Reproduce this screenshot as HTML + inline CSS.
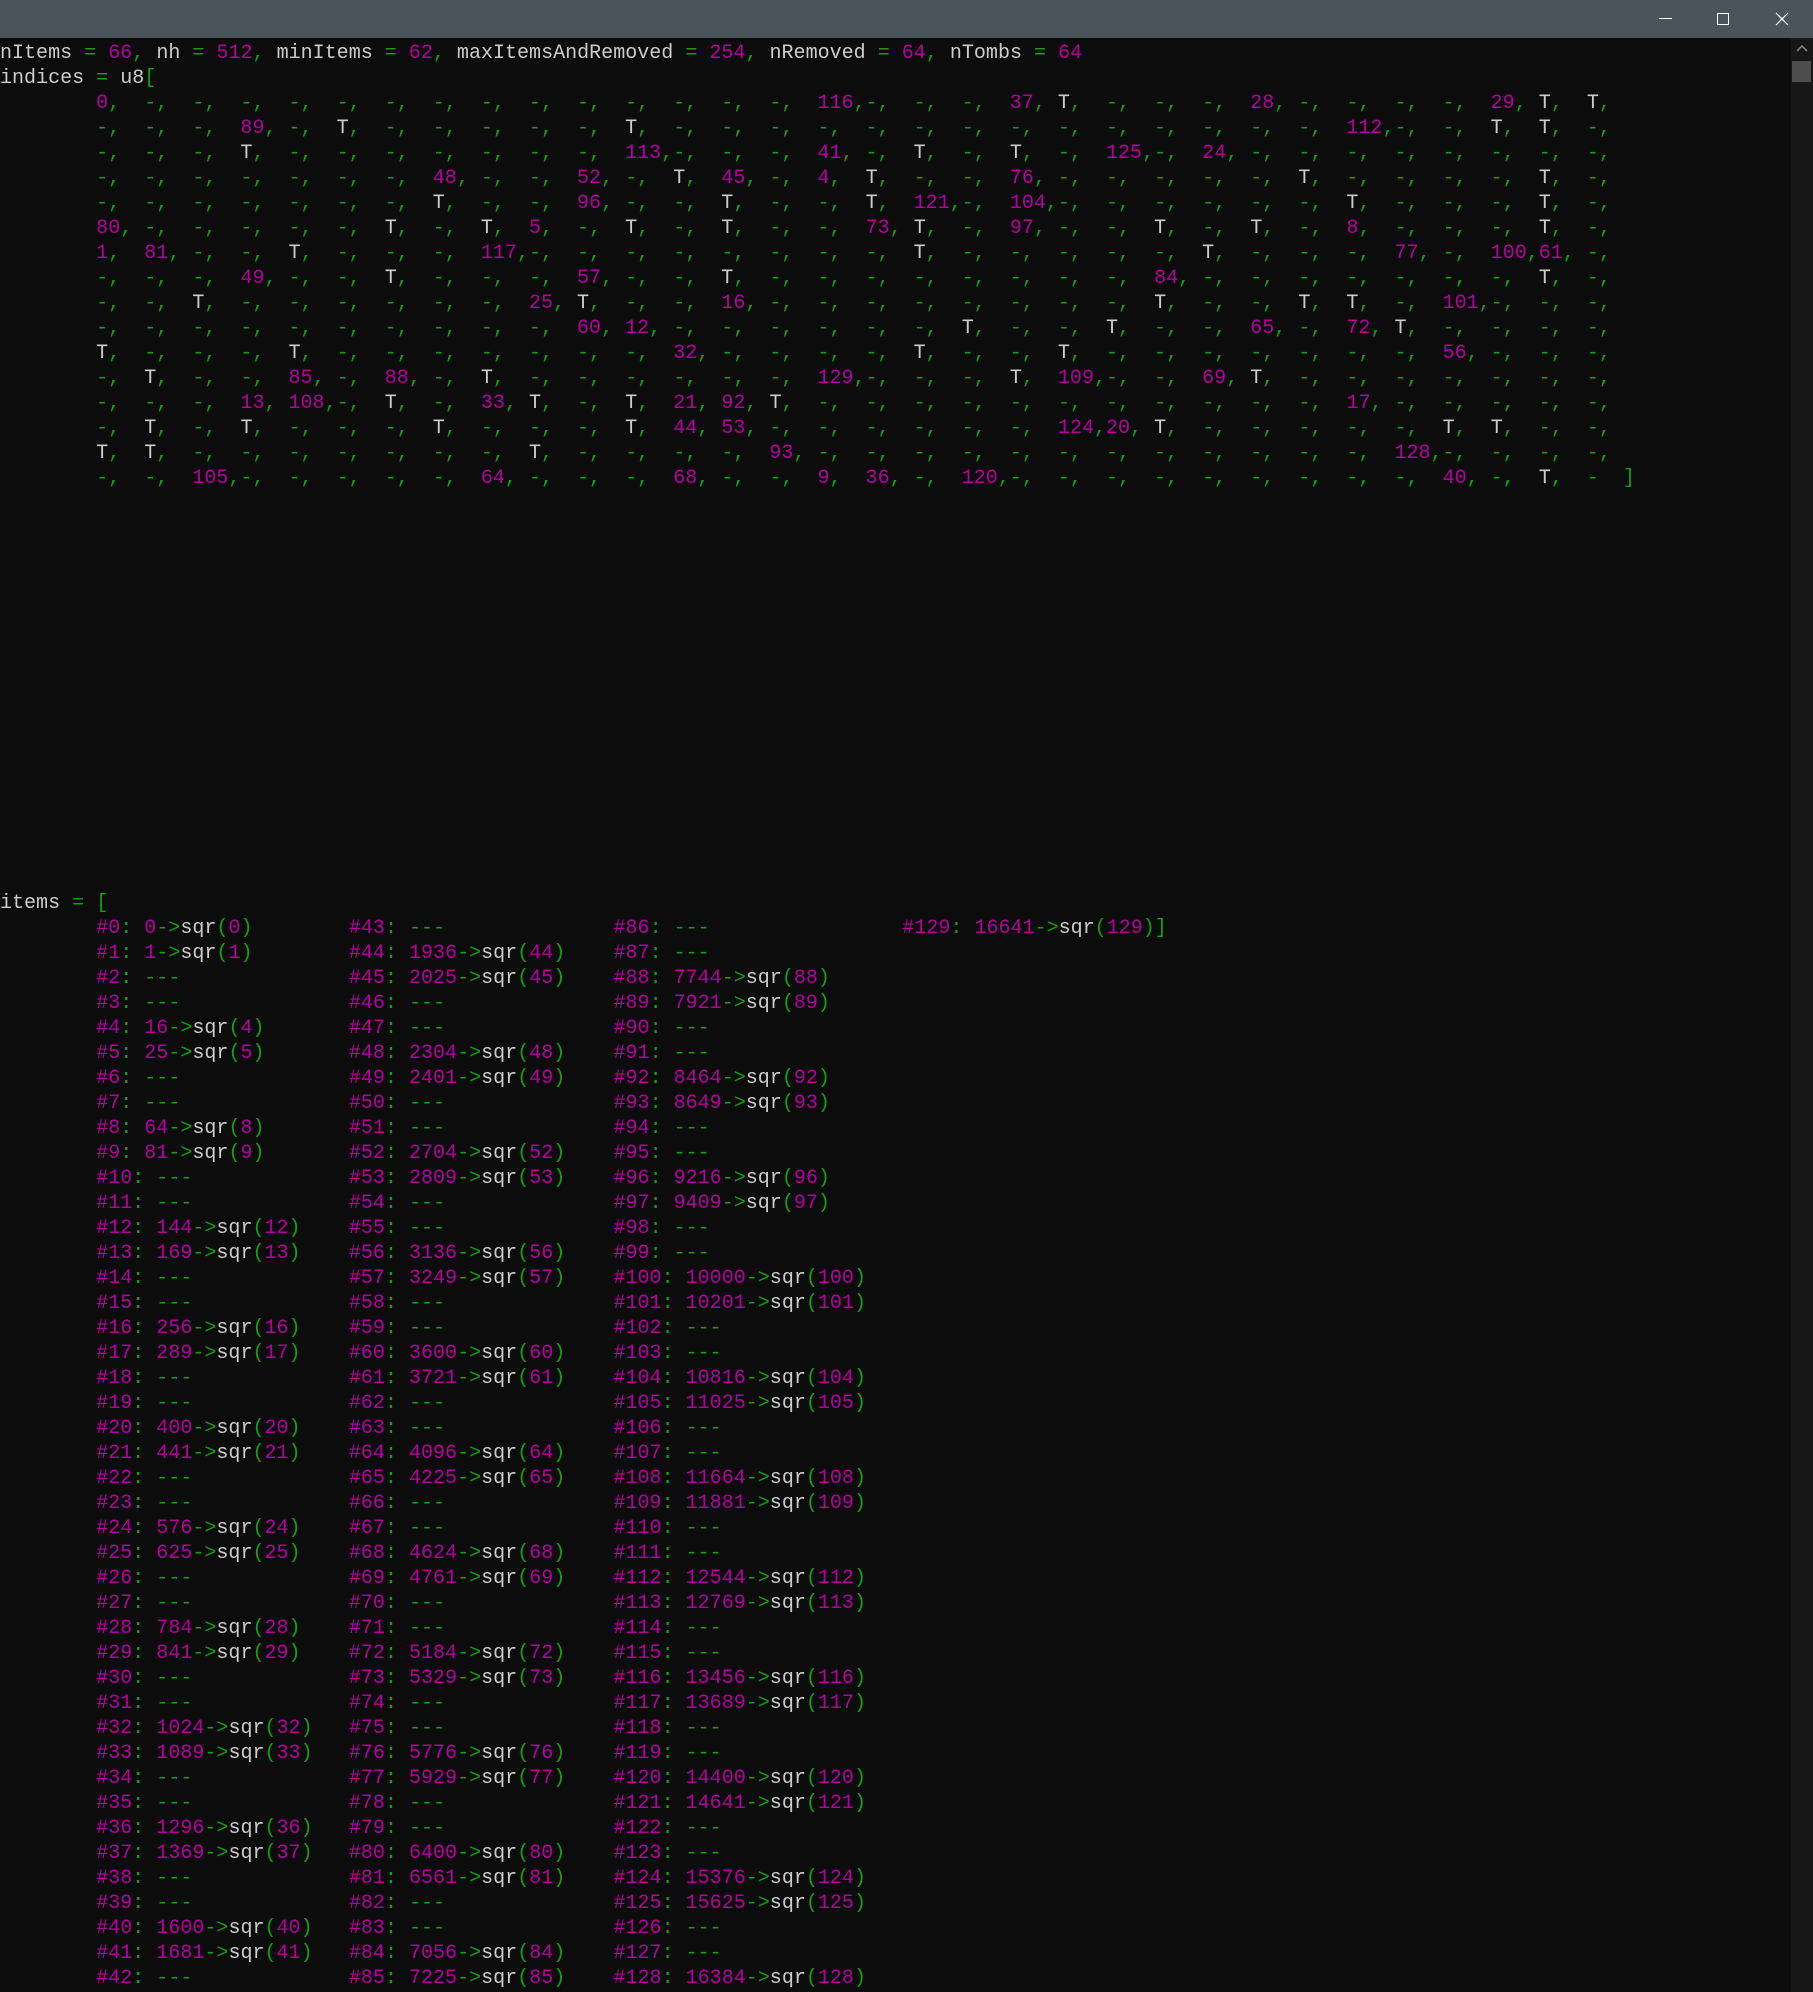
<!DOCTYPE html>
<html><head><meta charset="utf-8"><style>
html,body{margin:0;padding:0;background:#0c0c0c;width:1813px;height:1992px;overflow:hidden;position:relative}
.tb{position:absolute;left:0;top:0;width:1813px;height:38px;background:#4b535b}
pre{margin:0;position:absolute;font-family:"Liberation Mono",monospace;font-size:20.05px;line-height:25px;color:#cccccc;white-space:pre}
m{color:#b4009e}
g{color:#13a10e}
.sb{position:absolute;left:1791px;top:38px;width:22px;height:1954px;background:#171717}
.th{position:absolute;left:1792px;top:61px;width:19px;height:21px;background:#4d4d4d}
</style></head><body>
<div class="tb"></div>
<svg style="position:absolute;left:0;top:0" width="1813" height="38">
<line x1="1659" y1="18.5" x2="1672" y2="18.5" stroke="#fff" stroke-width="1"/>
<rect x="1717.5" y="13.5" width="11" height="11" fill="none" stroke="#fff" stroke-width="1"/>
<path d="M1776 13 L1788 25 M1788 13 L1776 25" stroke="#fff" stroke-width="1.2"/>
</svg>
<div class="sb"></div>
<div class="th"></div>
<svg style="position:absolute;left:1791px;top:38px" width="22" height="20"><path d="M6 13 L11 8 L16 13" fill="none" stroke="#8a8a8a" stroke-width="1.5"/></svg>
<pre style="left:0;top:40.5px">nItems <g>=</g> <m>66</m><g>,</g> nh <g>=</g> <m>512</m><g>,</g> minItems <g>=</g> <m>62</m><g>,</g> maxItemsAndRemoved <g>=</g> <m>254</m><g>,</g> nRemoved <g>=</g> <m>64</m><g>,</g> nTombs <g>=</g> <m>64</m>
indices <g>=</g> u8<g>[</g>
        <m>0</m><g>,  -,  -,  -,  -,  -,  -,  -,  -,  -,  -,  -,  -,  -,  -,  </g><m>116</m><g>,-,  -,  -,  </g><m>37</m><g>, </g>T<g>,  -,  -,  -,  </g><m>28</m><g>, -,  -,  -,  -,  </g><m>29</m><g>, </g>T<g>,  </g>T<g>,</g>
        <g>-,  -,  -,  </g><m>89</m><g>, -,  </g>T<g>,  -,  -,  -,  -,  -,  </g>T<g>,  -,  -,  -,  -,  -,  -,  -,  -,  -,  -,  -,  -,  -,  -,  </g><m>112</m><g>,-,  -,  </g>T<g>,  </g>T<g>,  -,</g>
        <g>-,  -,  -,  </g>T<g>,  -,  -,  -,  -,  -,  -,  -,  </g><m>113</m><g>,-,  -,  -,  </g><m>41</m><g>, -,  </g>T<g>,  -,  </g>T<g>,  -,  </g><m>125</m><g>,-,  </g><m>24</m><g>, -,  -,  -,  -,  -,  -,  -,  -,</g>
        <g>-,  -,  -,  -,  -,  -,  -,  </g><m>48</m><g>, -,  -,  </g><m>52</m><g>, -,  </g>T<g>,  </g><m>45</m><g>, -,  </g><m>4</m><g>,  </g>T<g>,  -,  -,  </g><m>76</m><g>, -,  -,  -,  -,  -,  </g>T<g>,  -,  -,  -,  -,  </g>T<g>,  -,</g>
        <g>-,  -,  -,  -,  -,  -,  -,  </g>T<g>,  -,  -,  </g><m>96</m><g>, -,  -,  </g>T<g>,  -,  -,  </g>T<g>,  </g><m>121</m><g>,-,  </g><m>104</m><g>,-,  -,  -,  -,  -,  -,  </g>T<g>,  -,  -,  -,  </g>T<g>,  -,</g>
        <m>80</m><g>, -,  -,  -,  -,  -,  </g>T<g>,  -,  </g>T<g>,  </g><m>5</m><g>,  -,  </g>T<g>,  -,  </g>T<g>,  -,  -,  </g><m>73</m><g>, </g>T<g>,  -,  </g><m>97</m><g>, -,  -,  </g>T<g>,  -,  </g>T<g>,  -,  </g><m>8</m><g>,  -,  -,  -,  </g>T<g>,  -,</g>
        <m>1</m><g>,  </g><m>81</m><g>, -,  -,  </g>T<g>,  -,  -,  -,  </g><m>117</m><g>,-,  -,  -,  -,  -,  -,  -,  -,  </g>T<g>,  -,  -,  -,  -,  -,  </g>T<g>,  -,  -,  -,  </g><m>77</m><g>, -,  </g><m>100</m><g>,</g><m>61</m><g>, -,</g>
        <g>-,  -,  -,  </g><m>49</m><g>, -,  -,  </g>T<g>,  -,  -,  -,  </g><m>57</m><g>, -,  -,  </g>T<g>,  -,  -,  -,  -,  -,  -,  -,  -,  </g><m>84</m><g>, -,  -,  -,  -,  -,  -,  -,  </g>T<g>,  -,</g>
        <g>-,  -,  </g>T<g>,  -,  -,  -,  -,  -,  -,  </g><m>25</m><g>, </g>T<g>,  -,  -,  </g><m>16</m><g>, -,  -,  -,  -,  -,  -,  -,  -,  </g>T<g>,  -,  -,  </g>T<g>,  </g>T<g>,  -,  </g><m>101</m><g>,-,  -,  -,</g>
        <g>-,  -,  -,  -,  -,  -,  -,  -,  -,  -,  </g><m>60</m><g>, </g><m>12</m><g>, -,  -,  -,  -,  -,  -,  </g>T<g>,  -,  -,  </g>T<g>,  -,  -,  </g><m>65</m><g>, -,  </g><m>72</m><g>, </g>T<g>,  -,  -,  -,  -,</g>
        T<g>,  -,  -,  -,  </g>T<g>,  -,  -,  -,  -,  -,  -,  -,  </g><m>32</m><g>, -,  -,  -,  -,  </g>T<g>,  -,  -,  </g>T<g>,  -,  -,  -,  -,  -,  -,  -,  </g><m>56</m><g>, -,  -,  -,</g>
        <g>-,  </g>T<g>,  -,  -,  </g><m>85</m><g>, -,  </g><m>88</m><g>, -,  </g>T<g>,  -,  -,  -,  -,  -,  -,  </g><m>129</m><g>,-,  -,  -,  </g>T<g>,  </g><m>109</m><g>,-,  -,  </g><m>69</m><g>, </g>T<g>,  -,  -,  -,  -,  -,  -,  -,</g>
        <g>-,  -,  -,  </g><m>13</m><g>, </g><m>108</m><g>,-,  </g>T<g>,  -,  </g><m>33</m><g>, </g>T<g>,  -,  </g>T<g>,  </g><m>21</m><g>, </g><m>92</m><g>, </g>T<g>,  -,  -,  -,  -,  -,  -,  -,  -,  -,  -,  -,  </g><m>17</m><g>, -,  -,  -,  -,  -,</g>
        <g>-,  </g>T<g>,  -,  </g>T<g>,  -,  -,  -,  </g>T<g>,  -,  -,  -,  </g>T<g>,  </g><m>44</m><g>, </g><m>53</m><g>, -,  -,  -,  -,  -,  -,  </g><m>124</m><g>,</g><m>20</m><g>, </g>T<g>,  -,  -,  -,  -,  -,  </g>T<g>,  </g>T<g>,  -,  -,</g>
        T<g>,  </g>T<g>,  -,  -,  -,  -,  -,  -,  -,  </g>T<g>,  -,  -,  -,  -,  </g><m>93</m><g>, -,  -,  -,  -,  -,  -,  -,  -,  -,  -,  -,  -,  </g><m>128</m><g>,-,  -,  -,  -,</g>
        <g>-,  -,  </g><m>105</m><g>,-,  -,  -,  -,  -,  </g><m>64</m><g>, -,  -,  -,  </g><m>68</m><g>, -,  -,  </g><m>9</m><g>,  </g><m>36</m><g>, -,  </g><m>120</m><g>,-,  -,  -,  -,  -,  -,  -,  -,  -,  </g><m>40</m><g>, -,  </g>T<g>,  -  ]</g>
</pre>
<pre style="left:0;top:890.5px">items <g>=</g> <g>[</g></pre>
<pre style="left:96.2px;top:915.5px"><m>#0</m><g>: </g><m>0</m><g>-&gt;</g>sqr<g>(</g><m>0</m><g>)</g>
<m>#1</m><g>: </g><m>1</m><g>-&gt;</g>sqr<g>(</g><m>1</m><g>)</g>
<m>#2</m><g>: ---</g>
<m>#3</m><g>: ---</g>
<m>#4</m><g>: </g><m>16</m><g>-&gt;</g>sqr<g>(</g><m>4</m><g>)</g>
<m>#5</m><g>: </g><m>25</m><g>-&gt;</g>sqr<g>(</g><m>5</m><g>)</g>
<m>#6</m><g>: ---</g>
<m>#7</m><g>: ---</g>
<m>#8</m><g>: </g><m>64</m><g>-&gt;</g>sqr<g>(</g><m>8</m><g>)</g>
<m>#9</m><g>: </g><m>81</m><g>-&gt;</g>sqr<g>(</g><m>9</m><g>)</g>
<m>#10</m><g>: ---</g>
<m>#11</m><g>: ---</g>
<m>#12</m><g>: </g><m>144</m><g>-&gt;</g>sqr<g>(</g><m>12</m><g>)</g>
<m>#13</m><g>: </g><m>169</m><g>-&gt;</g>sqr<g>(</g><m>13</m><g>)</g>
<m>#14</m><g>: ---</g>
<m>#15</m><g>: ---</g>
<m>#16</m><g>: </g><m>256</m><g>-&gt;</g>sqr<g>(</g><m>16</m><g>)</g>
<m>#17</m><g>: </g><m>289</m><g>-&gt;</g>sqr<g>(</g><m>17</m><g>)</g>
<m>#18</m><g>: ---</g>
<m>#19</m><g>: ---</g>
<m>#20</m><g>: </g><m>400</m><g>-&gt;</g>sqr<g>(</g><m>20</m><g>)</g>
<m>#21</m><g>: </g><m>441</m><g>-&gt;</g>sqr<g>(</g><m>21</m><g>)</g>
<m>#22</m><g>: ---</g>
<m>#23</m><g>: ---</g>
<m>#24</m><g>: </g><m>576</m><g>-&gt;</g>sqr<g>(</g><m>24</m><g>)</g>
<m>#25</m><g>: </g><m>625</m><g>-&gt;</g>sqr<g>(</g><m>25</m><g>)</g>
<m>#26</m><g>: ---</g>
<m>#27</m><g>: ---</g>
<m>#28</m><g>: </g><m>784</m><g>-&gt;</g>sqr<g>(</g><m>28</m><g>)</g>
<m>#29</m><g>: </g><m>841</m><g>-&gt;</g>sqr<g>(</g><m>29</m><g>)</g>
<m>#30</m><g>: ---</g>
<m>#31</m><g>: ---</g>
<m>#32</m><g>: </g><m>1024</m><g>-&gt;</g>sqr<g>(</g><m>32</m><g>)</g>
<m>#33</m><g>: </g><m>1089</m><g>-&gt;</g>sqr<g>(</g><m>33</m><g>)</g>
<m>#34</m><g>: ---</g>
<m>#35</m><g>: ---</g>
<m>#36</m><g>: </g><m>1296</m><g>-&gt;</g>sqr<g>(</g><m>36</m><g>)</g>
<m>#37</m><g>: </g><m>1369</m><g>-&gt;</g>sqr<g>(</g><m>37</m><g>)</g>
<m>#38</m><g>: ---</g>
<m>#39</m><g>: ---</g>
<m>#40</m><g>: </g><m>1600</m><g>-&gt;</g>sqr<g>(</g><m>40</m><g>)</g>
<m>#41</m><g>: </g><m>1681</m><g>-&gt;</g>sqr<g>(</g><m>41</m><g>)</g>
<m>#42</m><g>: ---</g></pre>
<pre style="left:348.9px;top:915.5px"><m>#43</m><g>: ---</g>
<m>#44</m><g>: </g><m>1936</m><g>-&gt;</g>sqr<g>(</g><m>44</m><g>)</g>
<m>#45</m><g>: </g><m>2025</m><g>-&gt;</g>sqr<g>(</g><m>45</m><g>)</g>
<m>#46</m><g>: ---</g>
<m>#47</m><g>: ---</g>
<m>#48</m><g>: </g><m>2304</m><g>-&gt;</g>sqr<g>(</g><m>48</m><g>)</g>
<m>#49</m><g>: </g><m>2401</m><g>-&gt;</g>sqr<g>(</g><m>49</m><g>)</g>
<m>#50</m><g>: ---</g>
<m>#51</m><g>: ---</g>
<m>#52</m><g>: </g><m>2704</m><g>-&gt;</g>sqr<g>(</g><m>52</m><g>)</g>
<m>#53</m><g>: </g><m>2809</m><g>-&gt;</g>sqr<g>(</g><m>53</m><g>)</g>
<m>#54</m><g>: ---</g>
<m>#55</m><g>: ---</g>
<m>#56</m><g>: </g><m>3136</m><g>-&gt;</g>sqr<g>(</g><m>56</m><g>)</g>
<m>#57</m><g>: </g><m>3249</m><g>-&gt;</g>sqr<g>(</g><m>57</m><g>)</g>
<m>#58</m><g>: ---</g>
<m>#59</m><g>: ---</g>
<m>#60</m><g>: </g><m>3600</m><g>-&gt;</g>sqr<g>(</g><m>60</m><g>)</g>
<m>#61</m><g>: </g><m>3721</m><g>-&gt;</g>sqr<g>(</g><m>61</m><g>)</g>
<m>#62</m><g>: ---</g>
<m>#63</m><g>: ---</g>
<m>#64</m><g>: </g><m>4096</m><g>-&gt;</g>sqr<g>(</g><m>64</m><g>)</g>
<m>#65</m><g>: </g><m>4225</m><g>-&gt;</g>sqr<g>(</g><m>65</m><g>)</g>
<m>#66</m><g>: ---</g>
<m>#67</m><g>: ---</g>
<m>#68</m><g>: </g><m>4624</m><g>-&gt;</g>sqr<g>(</g><m>68</m><g>)</g>
<m>#69</m><g>: </g><m>4761</m><g>-&gt;</g>sqr<g>(</g><m>69</m><g>)</g>
<m>#70</m><g>: ---</g>
<m>#71</m><g>: ---</g>
<m>#72</m><g>: </g><m>5184</m><g>-&gt;</g>sqr<g>(</g><m>72</m><g>)</g>
<m>#73</m><g>: </g><m>5329</m><g>-&gt;</g>sqr<g>(</g><m>73</m><g>)</g>
<m>#74</m><g>: ---</g>
<m>#75</m><g>: ---</g>
<m>#76</m><g>: </g><m>5776</m><g>-&gt;</g>sqr<g>(</g><m>76</m><g>)</g>
<m>#77</m><g>: </g><m>5929</m><g>-&gt;</g>sqr<g>(</g><m>77</m><g>)</g>
<m>#78</m><g>: ---</g>
<m>#79</m><g>: ---</g>
<m>#80</m><g>: </g><m>6400</m><g>-&gt;</g>sqr<g>(</g><m>80</m><g>)</g>
<m>#81</m><g>: </g><m>6561</m><g>-&gt;</g>sqr<g>(</g><m>81</m><g>)</g>
<m>#82</m><g>: ---</g>
<m>#83</m><g>: ---</g>
<m>#84</m><g>: </g><m>7056</m><g>-&gt;</g>sqr<g>(</g><m>84</m><g>)</g>
<m>#85</m><g>: </g><m>7225</m><g>-&gt;</g>sqr<g>(</g><m>85</m><g>)</g></pre>
<pre style="left:613.5px;top:915.5px"><m>#86</m><g>: ---</g>
<m>#87</m><g>: ---</g>
<m>#88</m><g>: </g><m>7744</m><g>-&gt;</g>sqr<g>(</g><m>88</m><g>)</g>
<m>#89</m><g>: </g><m>7921</m><g>-&gt;</g>sqr<g>(</g><m>89</m><g>)</g>
<m>#90</m><g>: ---</g>
<m>#91</m><g>: ---</g>
<m>#92</m><g>: </g><m>8464</m><g>-&gt;</g>sqr<g>(</g><m>92</m><g>)</g>
<m>#93</m><g>: </g><m>8649</m><g>-&gt;</g>sqr<g>(</g><m>93</m><g>)</g>
<m>#94</m><g>: ---</g>
<m>#95</m><g>: ---</g>
<m>#96</m><g>: </g><m>9216</m><g>-&gt;</g>sqr<g>(</g><m>96</m><g>)</g>
<m>#97</m><g>: </g><m>9409</m><g>-&gt;</g>sqr<g>(</g><m>97</m><g>)</g>
<m>#98</m><g>: ---</g>
<m>#99</m><g>: ---</g>
<m>#100</m><g>: </g><m>10000</m><g>-&gt;</g>sqr<g>(</g><m>100</m><g>)</g>
<m>#101</m><g>: </g><m>10201</m><g>-&gt;</g>sqr<g>(</g><m>101</m><g>)</g>
<m>#102</m><g>: ---</g>
<m>#103</m><g>: ---</g>
<m>#104</m><g>: </g><m>10816</m><g>-&gt;</g>sqr<g>(</g><m>104</m><g>)</g>
<m>#105</m><g>: </g><m>11025</m><g>-&gt;</g>sqr<g>(</g><m>105</m><g>)</g>
<m>#106</m><g>: ---</g>
<m>#107</m><g>: ---</g>
<m>#108</m><g>: </g><m>11664</m><g>-&gt;</g>sqr<g>(</g><m>108</m><g>)</g>
<m>#109</m><g>: </g><m>11881</m><g>-&gt;</g>sqr<g>(</g><m>109</m><g>)</g>
<m>#110</m><g>: ---</g>
<m>#111</m><g>: ---</g>
<m>#112</m><g>: </g><m>12544</m><g>-&gt;</g>sqr<g>(</g><m>112</m><g>)</g>
<m>#113</m><g>: </g><m>12769</m><g>-&gt;</g>sqr<g>(</g><m>113</m><g>)</g>
<m>#114</m><g>: ---</g>
<m>#115</m><g>: ---</g>
<m>#116</m><g>: </g><m>13456</m><g>-&gt;</g>sqr<g>(</g><m>116</m><g>)</g>
<m>#117</m><g>: </g><m>13689</m><g>-&gt;</g>sqr<g>(</g><m>117</m><g>)</g>
<m>#118</m><g>: ---</g>
<m>#119</m><g>: ---</g>
<m>#120</m><g>: </g><m>14400</m><g>-&gt;</g>sqr<g>(</g><m>120</m><g>)</g>
<m>#121</m><g>: </g><m>14641</m><g>-&gt;</g>sqr<g>(</g><m>121</m><g>)</g>
<m>#122</m><g>: ---</g>
<m>#123</m><g>: ---</g>
<m>#124</m><g>: </g><m>15376</m><g>-&gt;</g>sqr<g>(</g><m>124</m><g>)</g>
<m>#125</m><g>: </g><m>15625</m><g>-&gt;</g>sqr<g>(</g><m>125</m><g>)</g>
<m>#126</m><g>: ---</g>
<m>#127</m><g>: ---</g>
<m>#128</m><g>: </g><m>16384</m><g>-&gt;</g>sqr<g>(</g><m>128</m><g>)</g></pre>
<pre style="left:902.3px;top:915.5px"><m>#129</m><g>: </g><m>16641</m><g>-&gt;</g>sqr<g>(</g><m>129</m><g>)]</g></pre>
</body></html>
